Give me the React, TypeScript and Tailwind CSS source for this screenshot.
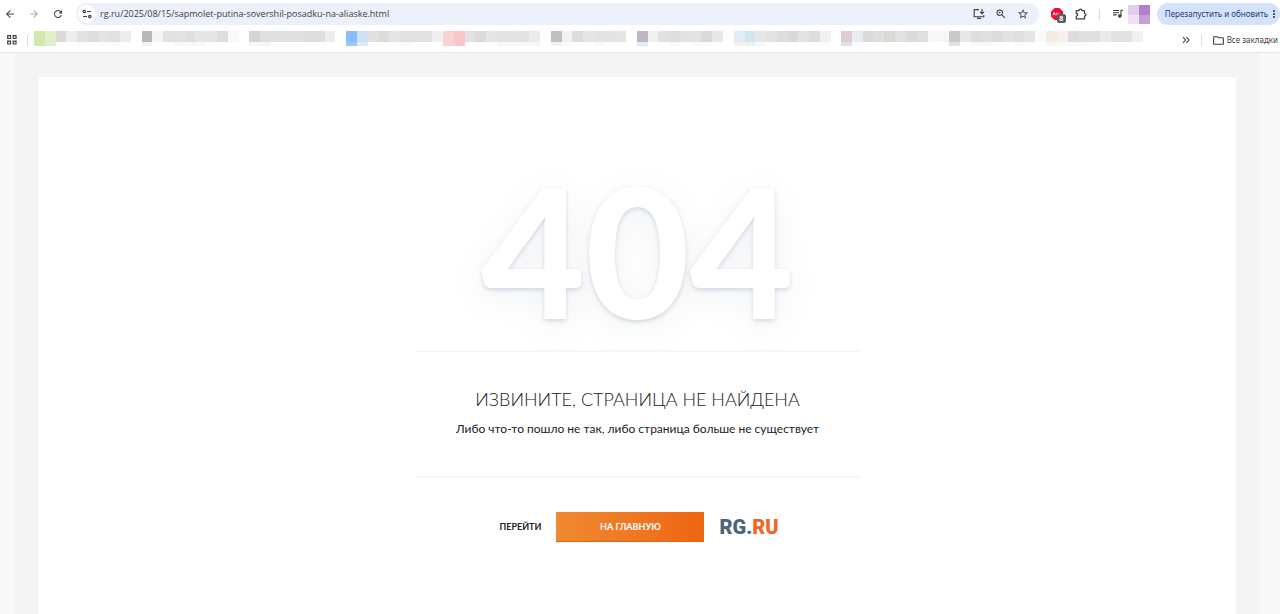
import * as React from "react"
import {
  MdArrowBack,
  MdArrowForward,
  MdRefresh,
  MdZoomIn,
  MdStarBorder,
  MdMoreVert,
  MdOutlineFolder,
} from "react-icons/md"

// One entry per column of the blurred bookmarks strip, "-" is an empty column
const mosaicTop = (
  "d3e8b0 e2efcb dbdada ededee e2e2e3 dcdde0 e3e3e3 e1e1e1 ededed - " +
  "b8b8b8 f5f5f5 e3e2e0 e1e4e2 dedfdf e4e6e4 e4e6e4 e0dedc f8f9fb - " +
  "d5d5d5 e0e0e0 e0e0e0 e0e0e0 e0e0e0 dedede dedede eceeed - " +
  "88bcfd cfe1f9 e2e0de dbdbdd e4e6e3 e0e1e1 e1e1e0 e1e1df efefef " +
  "fbd2d4 f9c7c9 e3e3e1 dbdddc e6e6e6 e3e3e3 e6e3e4 e1e3e5 ebebe9 - " +
  "bfbfbf f2f2f1 dbdedd e4e6e6 e5e2e0 e4e4e4 e5e5e5 - " +
  "bfb5c5 f0f0f0 dfe2e0 dedfdd e2e2e0 e3e3e5 dadadb e8e8e8 fcfdfd " +
  "e0ecf6 d1e4f1 e6e6e6 e3e3e3 dcdfdd d8d9d8 e3e3e3 dbdde0 f1f1f1 - " +
  "e0cbd0 e7edf1 dadada dfdfdd dad9d5 e1e1e0 d7dbd9 dfdfdd f7f9f8 f7f7f7 " +
  "c7c9cb e9e6e3 dcdddc dfe1df dddcd9 e3e3e3 dfdfdf e3e6e4 fafafa " +
  "f6ebe2 f8f1e9 dcdce0 dfdfdd dfdfdf e9ebea e1e1df e1e1df f0f0f0"
).split(" ")

const mosaicBottom: Record<number, string> = {
  0: "d3e8b0", 1: "e2efcb", 4: "fafafc", 6: "fafafa", 7: "fafafa",
  10: "f2f2f2", 13: "f9f9f9", 14: "f9f9f9", 15: "f9f9f9",
  20: "f6f6f6", 21: "f6f6f6",
  29: "9ac6fc", 30: "deeafb", 34: "f9f9f9",
  38: "fbd0d2", 39: "f9c7c9", 43: "f8f8f8", 44: "f8f8f8", 45: "f8f8f8", 46: "f8f8f8",
  48: "f2f2f2", 49: "fafafa", 52: "f9f9f9",
  56: "dfedf5", 59: "f9f9f9", 61: "fafafa", 62: "fafafa",
  65: "f4f1ee", 66: "f2f0ec", 67: "f8f8f8", 73: "fafafa",
  75: "dfe1ea", 76: "fafdfe",
  85: "dfe3e7", 87: "f8f8f8", 88: "f8f8f8", 91: "fafafa",
  94: "fbf6f2", 95: "fbf9f5", 96: "fafafa", 97: "fafafa",
}

function BookmarkMosaic() {
  return (
    <div className="flex min-w-0 flex-1 pb-1" aria-hidden="true">
      {mosaicTop.map((color, i) => (
        <div key={i} className="flex flex-1 flex-col">
          <div className="h-[11px]" style={{ backgroundColor: color === "-" ? "transparent" : `#${color}` }} />
          <div className="h-1" style={{ backgroundColor: mosaicBottom[i] ? `#${mosaicBottom[i]}` : "transparent" }} />
        </div>
      ))}
    </div>
  )
}

function IconButton({ label, children }: { label: string; children: React.ReactNode }) {
  return (
    <button type="button" aria-label={label} className="relative flex size-3 shrink-0 items-center justify-center">
      {children}
    </button>
  )
}

function TuneIcon() {
  return (
    <svg viewBox="0 0 12 12" className="size-3" fill="none" stroke="#3c3f43" strokeWidth="1.2">
      <circle cx="3.2" cy="3.5" r="1.2" />
      <path d="M6 3.5h4M2 8.5h4" />
      <circle cx="8.8" cy="8.5" r="1.2" />
    </svg>
  )
}

function InstallIcon() {
  return (
    <svg viewBox="0 0 12 12" className="size-3 shrink-0" fill="none" stroke="#3c3f43" strokeWidth="1.1">
      <path d="M6 1.6H1.2v7.2h9.6V7M4 10.4h4M9 1v4.5M7 3.8l2 2 2-2" />
    </svg>
  )
}

function PuzzleIcon() {
  return (
    <svg viewBox="0 0 12 12" className="size-3 shrink-0" fill="none" stroke="#3c3f43" strokeWidth="1.2" strokeLinejoin="round">
      <path d="M1.2 2.6h2.9c0-2.1 2.7-2.1 2.7 0h2.7v2.9c2 0 2 2.6 0 2.6v2.8H1.2V8.2c2-.2 2-2.6 0-2.8z" />
    </svg>
  )
}

function PlaylistIcon() {
  return (
    <svg viewBox="0 0 12 12" className="size-3 shrink-0" fill="none" stroke="#3c3f43" strokeWidth="1.1">
      <path d="M1 2.5h6M1 4.7h6M1 6.9h3.6M9 8V2.2h2.2" />
      <circle cx="7.8" cy="8" r="1.2" fill="#3c3f43" />
    </svg>
  )
}

function AppsIcon() {
  return (
    <svg viewBox="0 0 10 10" className="size-[10px]" fill="none" stroke="#3c3f43" strokeWidth="1.2">
      <path d="M.7.7h2.8v2.8H.7zM6.2.7H9v2.8H6.2zM.7 6.2h2.8V9H.7zM6.2 6.2H9V9H6.2z" />
    </svg>
  )
}

function BrowserBar() {
  return (
    <header className="border-b border-[#e6e6e6] bg-white font-['Open_Sans',sans-serif] text-[#3c3f43]">
      <div className="flex h-7 items-center">
        <div className="flex gap-3 pl-1">
          <IconButton label="Назад"><MdArrowBack className="size-3" /></IconButton>
          <IconButton label="Вперёд"><MdArrowForward className="size-3 text-[#a8abae]" /></IconButton>
          <IconButton label="Обновить"><MdRefresh className="size-3" /></IconButton>
        </div>

        {/* Address */}
        <div className="ml-3 flex h-[22px] min-w-0 flex-1 items-center rounded-full bg-[#ebf0fa] pr-[10px] pl-0.5">
          <button type="button" aria-label="Сведения о сайте" className="flex size-[18px] items-center justify-center rounded-full bg-white">
            <TuneIcon />
          </button>
          <input
            type="text"
            aria-label="Адресная строка"
            className="min-w-0 flex-1 bg-transparent pl-1 text-[9px] leading-4 outline-none"
            defaultValue="rg.ru/2025/08/15/sapmolet-putina-sovershil-posadku-na-aliaske.html"
          />
          <div className="flex gap-[10px]">
            <IconButton label="Установить"><InstallIcon /></IconButton>
            <IconButton label="Масштаб"><MdZoomIn className="size-3" /></IconButton>
            <IconButton label="Добавить в закладки"><MdStarBorder className="size-3" /></IconButton>
          </div>
        </div>

        <div className="ml-3 flex items-center">
          <IconButton label="Adblock">
            <svg viewBox="0 0 12 12" className="size-3">
              <path d="M3.6 0h4.8L12 3.6v4.8L8.4 12H3.6L0 8.4V3.6z" fill="#f20d33" />
              <path d="M2 7.2l1-2.8 1 2.8M5.2 4.6v2.6M7 4.6v2.6" stroke="#fff" strokeWidth=".8" fill="none" />
            </svg>
            <span className="absolute top-[6px] left-[6px] flex size-[9px] items-center justify-center rounded-xs bg-[#5c5f62] text-[7px] leading-none font-bold text-white">
              8
            </span>
          </IconButton>
          <span className="w-3" />
          <IconButton label="Расширения"><PuzzleIcon /></IconButton>
          <span className="mx-3 h-[11px] w-px bg-[#c9dcf8]" />
          <IconButton label="Медиа"><PlaylistIcon /></IconButton>
          <div className="ml-1 grid grid-cols-2" aria-hidden="true">
            <span className="h-[10px] w-[11px] bg-[#e2cdea]" />
            <span className="h-[10px] w-[11px] bg-[#b380ca]" />
            <span className="h-[9px] w-[11px] bg-[#efe3f3]" />
            <span className="h-[9px] w-[11px] bg-[#c7a0d9]" />
          </div>
        </div>

        <button type="button" className="ml-[7px] flex h-[22px] items-center rounded-full bg-[#d3e3fd] pl-2 font-['Noto_Sans',sans-serif] text-[8px] whitespace-nowrap text-[#1f3b6f]">
          Перезапустить и обновить
          <MdMoreVert className="size-3" />
        </button>
      </div>

      <div className="flex h-6 items-center">
        <button type="button" aria-label="Сервисы" className="ml-[7px]"><AppsIcon /></button>
        <span className="mr-[6px] ml-[10px] h-[11px] w-px bg-[#c9dcf8]" />
        <BookmarkMosaic />
        <button type="button" aria-label="Ещё закладки" className="ml-[39px]">
          <svg viewBox="0 0 8 8" className="size-2" fill="none" stroke="#3c3f43" strokeWidth="1.1">
            <path d="M1 1.2L3.6 4 1 6.8M4.4 1.2L7 4 4.4 6.8" />
          </svg>
        </button>
        <span className="mr-[10px] ml-[11px] h-[11px] w-px bg-[#c9dcf8]" />
        <button type="button" className="mr-0.5 flex items-center gap-0.5 font-['Noto_Sans',sans-serif] text-[8px] whitespace-nowrap">
          <MdOutlineFolder className="size-[13px]" />
          Все закладки
        </button>
      </div>
    </header>
  )
}

function RgLogo() {
  return (
    <a href="#" className="w-14 font-['Roboto',sans-serif] text-[20px] leading-6 font-black whitespace-nowrap text-[#4a6678]">
      RG.<span className="text-[#f26522]">RU</span>
    </a>
  )
}

export default function App() {
  return (
    <div className="flex min-h-screen flex-col bg-[#f8f8f8] font-['Lato',sans-serif]">
      <BrowserBar />

      <main className="mr-5 ml-[15px] flex flex-1 flex-col bg-[#f4f4f4] px-6 pt-6">
        <section className="flex flex-1 flex-col items-center bg-white px-4 pt-20 pb-16 text-center">
          <div className="w-full max-w-[444px]">
            <div className="pb-[9px] text-[180px] leading-[184px] font-black text-white [text-shadow:0_2px_4px_rgba(120,140,165,0.3),0_8px_32px_rgba(130,150,165,0.12)]">
              404
            </div>

            <div className="border-y-2 border-[#f7f7f7] pt-[35px] pb-[37px]">
              <h1 className="text-[18px] leading-6 font-light whitespace-nowrap text-[#222]">ИЗВИНИТЕ, СТРАНИЦА НЕ НАЙДЕНА</h1>
              <p className="mt-2 text-[12px] leading-5 whitespace-nowrap text-[#222]">
                Либо что-то пошло не так, либо страница больше не существует
              </p>
            </div>

            <div className="mt-[34px] flex items-center justify-center gap-[15px]">
              <span className="text-[9px] font-bold text-[#222]">ПЕРЕЙТИ</span>
              <a
                href="#"
                className="flex h-[30px] w-[148px] items-center justify-center border-b border-[#e0630f] bg-linear-to-r from-[#ef8a30] to-[#ee6510] text-[9px] font-bold text-white"
              >
                НА ГЛАВНУЮ
              </a>
              <RgLogo />
            </div>
          </div>
        </section>
      </main>
    </div>
  )
}
